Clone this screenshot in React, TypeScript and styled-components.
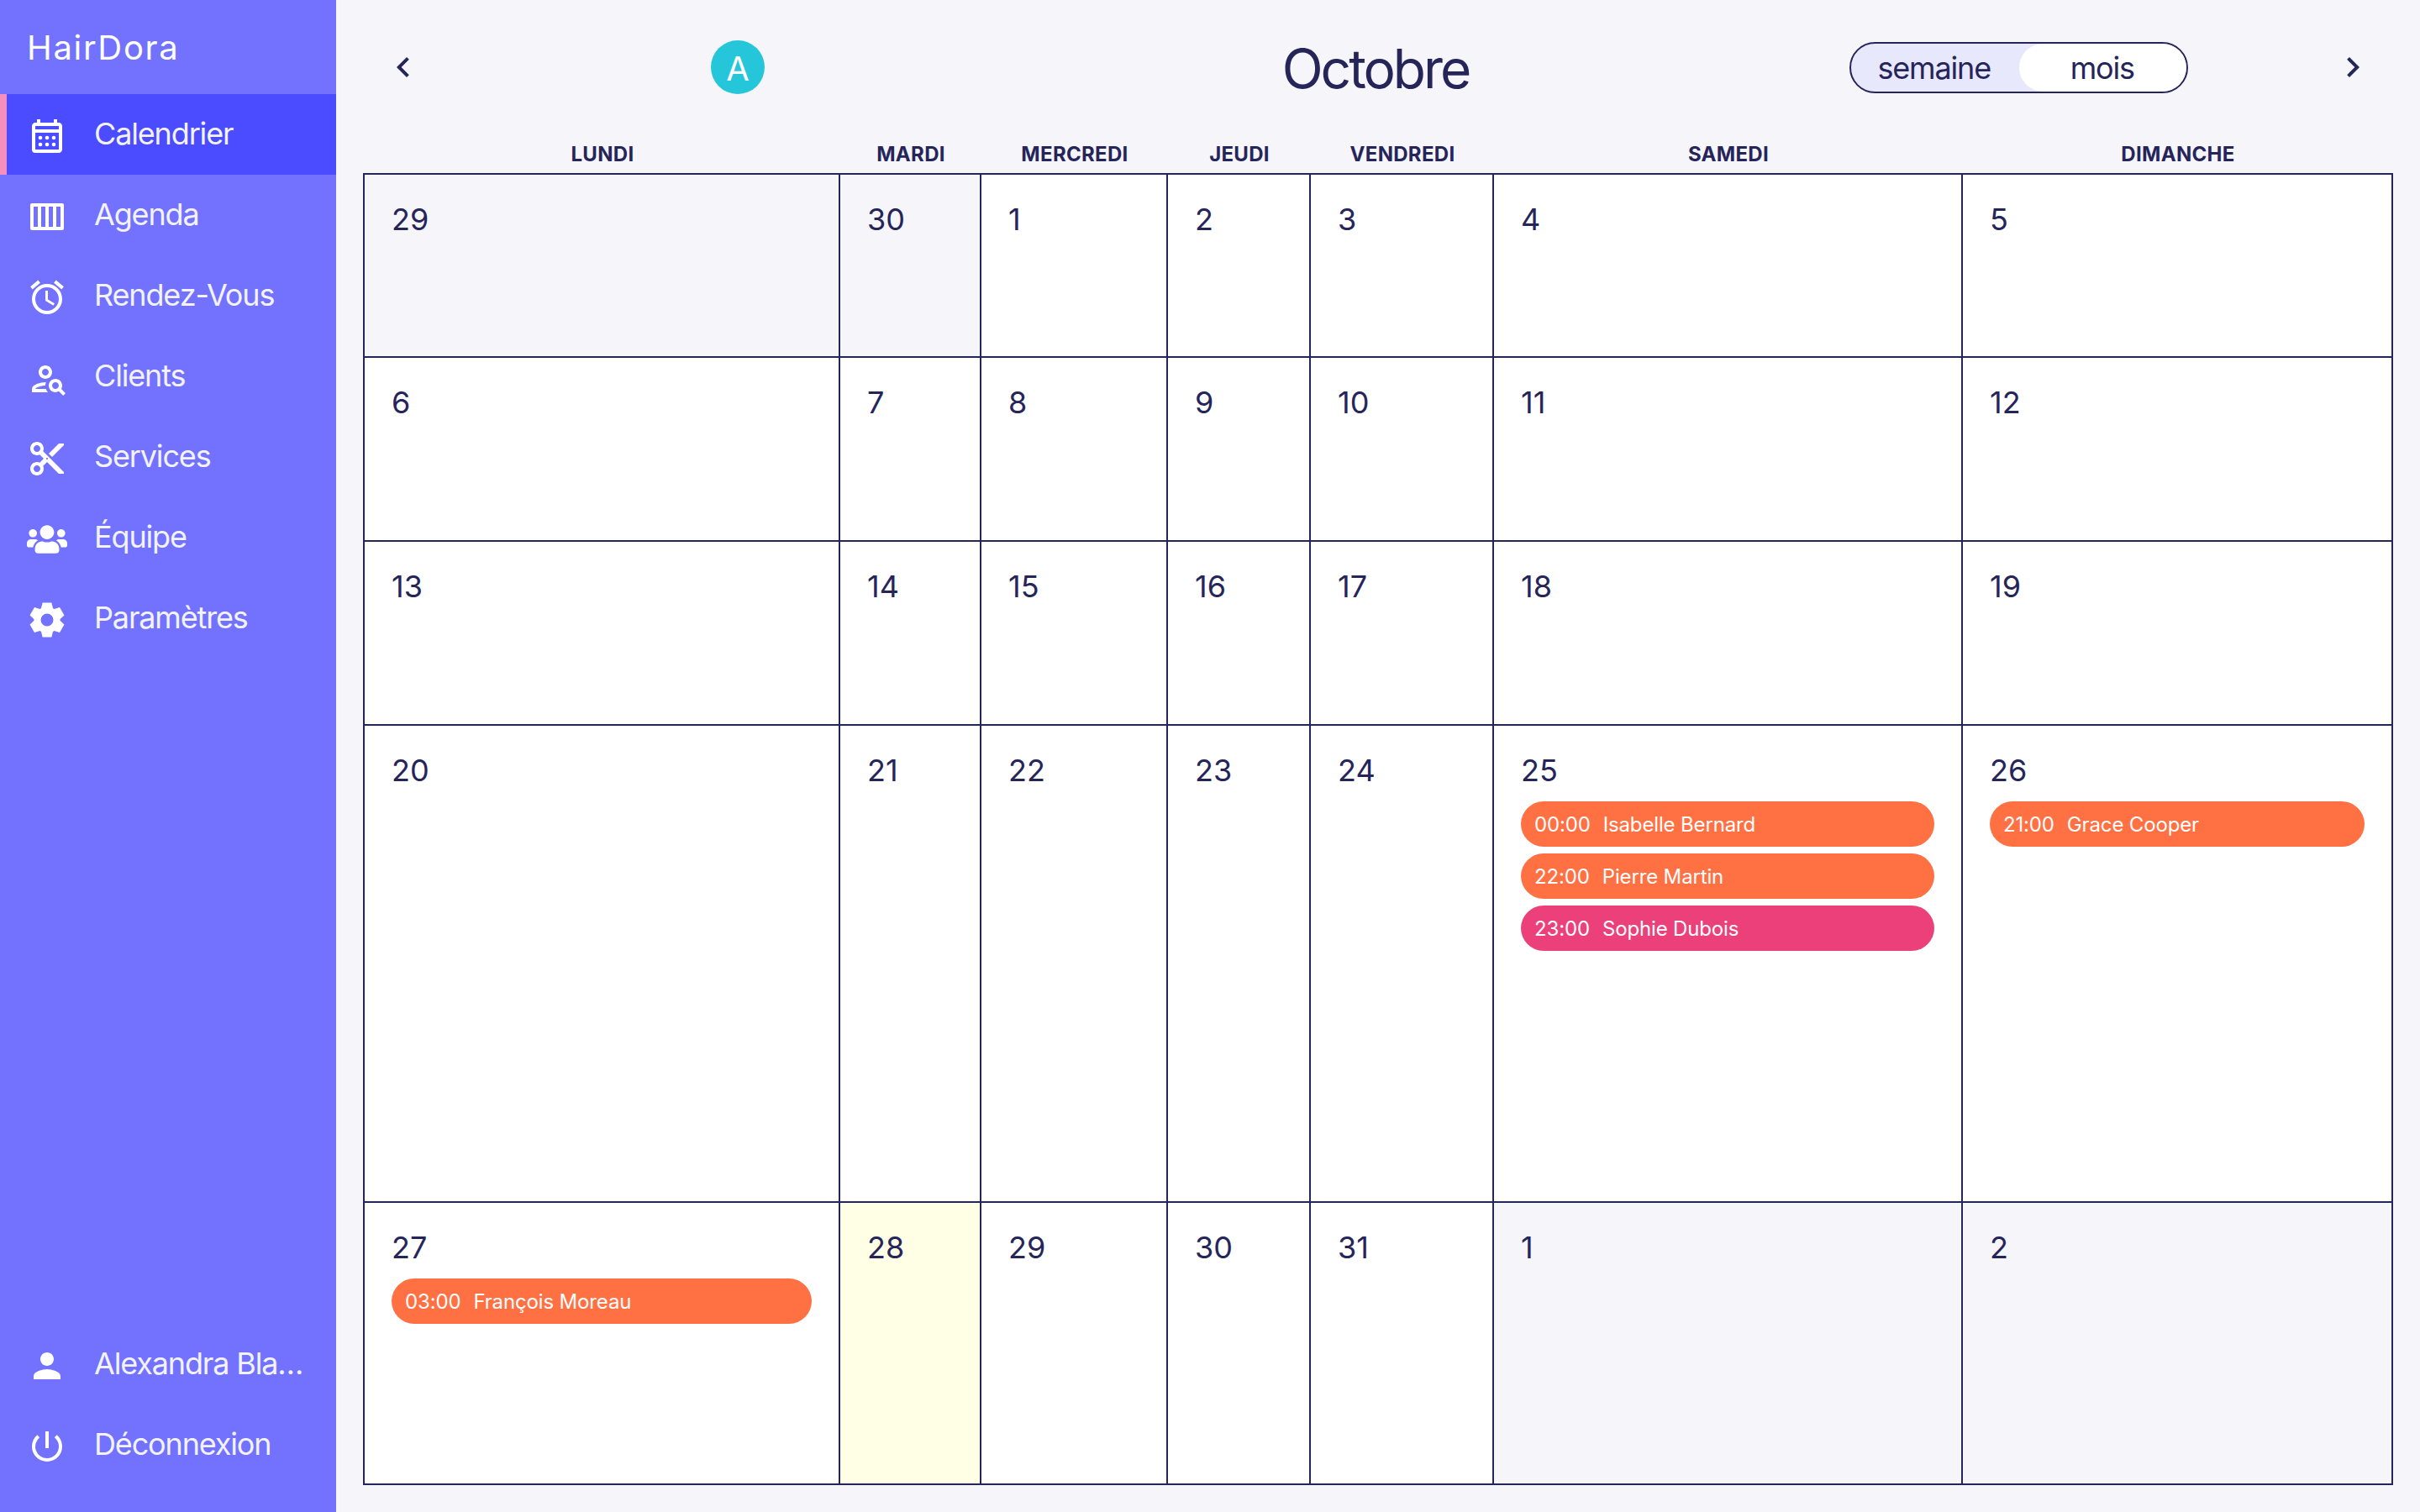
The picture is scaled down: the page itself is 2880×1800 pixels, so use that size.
import React from "react";
import styled, { createGlobalStyle } from "styled-components";
import {
  MdOutlineAlarm,
  MdContentCut,
  MdPerson,
  MdPowerSettingsNew,
  MdOutlinePersonSearch,
  MdChevronLeft,
  MdChevronRight,
} from "react-icons/md";
import { FaUsers } from "react-icons/fa";

const INK = "#25255a";

const GlobalStyle = createGlobalStyle`
  html, body { margin: 0; padding: 0; }
  body { font-family: Inter, "Liberation Sans", sans-serif; background: #f5f5fa; }
  * { box-sizing: border-box; }
`;

const Shell = styled.div`
  display: flex;
  width: 2880px;
  height: 1800px;
  background: #f5f5fa;
  color: ${INK};
  overflow: hidden;
`;

const Sidebar = styled.aside`
  width: 400px;
  flex: none;
  display: flex;
  flex-direction: column;
  background: #7272ff;
  padding-bottom: 32px;
`;

const Logo = styled.div`
  height: 112px;
  display: flex;
  align-items: center;
  padding-left: 32px;
  font-size: 40px;
  letter-spacing: 1.7px;
  color: #fff;
`;

const NavList = styled.nav`
  display: flex;
  flex-direction: column;
  flex: 1;
`;

const NavItem = styled.div<{ $active?: boolean }>`
  height: 96px;
  display: flex;
  align-items: center;
  gap: 32px;
  padding-left: ${(p) => (p.$active ? "24px" : "32px")};
  border-left: ${(p) => (p.$active ? "8px solid #f78fbc" : "none")};
  background: ${(p) => (p.$active ? "#4b4bff" : "transparent")};
  font-size: 36px;
  letter-spacing: -1.15px;
  color: #f3f3ff;
`;

const Spacer = styled.div`
  flex: 1;
`;

const NavIcon = styled.span`
  width: 48px;
  height: 48px;
  margin-top: 4px;
  flex: none;
  display: flex;
  align-items: center;
  justify-content: center;
  color: #fff;
  font-size: 48px;
`;

const NavLabel = styled.span`
  width: 256px;
  padding-bottom: 2px;
  white-space: nowrap;
  overflow: hidden;
  text-overflow: ellipsis;
`;

const SearchPerson = styled(MdOutlinePersonSearch)`
  transform: translate(2px, 1px);
`;

const Main = styled.main`
  flex: 1;
  min-width: 0;
  display: flex;
  flex-direction: column;
  padding: 48px 32px 0;
`;

const TopBar = styled.header`
  height: 64px;
  display: flex;
  align-items: center;
`;

const TopSide = styled.div<{ $end?: boolean }>`
  flex: 1;
  display: flex;
  align-items: center;
  justify-content: ${(p) => (p.$end ? "flex-end" : "flex-start")};
  gap: ${(p) => (p.$end ? "148px" : "318px")};
`;

const Chevron = styled.button`
  width: 96px;
  height: 64px;
  flex: none;
  border: none;
  padding: 0;
  background: none;
  display: flex;
  align-items: center;
  justify-content: center;
  color: ${INK};
  font-size: 48px;
`;

const Avatar = styled.div`
  width: 64px;
  height: 64px;
  padding-top: 3px;
  border-radius: 50%;
  background: #26c6da;
  color: #fff;
  display: flex;
  align-items: center;
  justify-content: center;
  font-size: 40px;
`;

const Title = styled.h1`
  margin: 3px 3px 0 -3px;
  font-size: 64px;
  font-weight: 400;
  line-height: 64px;
  letter-spacing: -3px;
  color: ${INK};
`;

const Toggle = styled.div`
  width: 403px;
  height: 61px;
  margin-top: 1px;
  display: grid;
  grid-template-columns: 1fr 1fr;
  border: 2px solid ${INK};
  border-radius: 31px;
  background: #e8e8fd;
  overflow: hidden;
`;

const ToggleOption = styled.div<{ $white?: boolean }>`
  display: flex;
  align-items: center;
  justify-content: center;
  padding-top: 1px;
  padding-right: ${(p) => (p.$white ? "1px" : "2px")};
  font-size: 36px;
  letter-spacing: -1.15px;
  border-radius: 30px;
  background: ${(p) => (p.$white ? "#fff" : "transparent")};
`;

const DayHeads = styled.div`
  margin-top: 57px;
  padding: 0 2px;
  display: grid;
  grid-template-columns: 566px 168px 222px 170px 218px 558px 512px;
`;

const DayHead = styled.div`
  height: 37px;
  padding-bottom: 8px;
  display: flex;
  align-items: center;
  justify-content: center;
  font-size: 24px;
  font-weight: 700;
  letter-spacing: 0.3px;
  color: ${INK};
`;

const Weeks = styled.div`
  width: 2416px;
  display: grid;
  grid-template-columns: 566px 168px 222px 170px 218px 558px 512px;
  grid-template-rows: 218px 219px 219px 568px 336px;
  border-top: 2px solid ${INK};
  border-left: 2px solid ${INK};
`;

const Cell = styled.div<{ $tone: "plain" | "muted" | "today" }>`
  padding: 31px 32px 0;
  border-right: 2px solid ${INK};
  border-bottom: 2px solid ${INK};
  min-width: 0;
  background: ${(p) =>
    p.$tone === "muted" ? "#f5f5fa" : p.$tone === "today" ? "#ffffe6" : "#fff"};
`;

const DayNumber = styled.div`
  font-size: 36px;
  line-height: 44px;
  margin-bottom: 15px;
  color: ${INK};
`;

const EventPill = styled.div<{ $pink?: boolean }>`
  height: 54px;
  margin-bottom: 8px;
  border-radius: 27px;
  padding: 0 16px;
  display: flex;
  align-items: center;
  gap: 15px;
  background: ${(p) => (p.$pink ? "#ec407a" : "#ff7043")};
  color: #fff;
  font-size: 24px;
  letter-spacing: -0.15px;
  white-space: nowrap;
`;

const CalendarIcon = () => (
  <svg width="48" height="48" viewBox="0 0 24 24" fill="#fff">
    <path
      fillRule="evenodd"
      d="M19 4h-1V2h-2v2H8V2H6v2H5c-1.11 0-1.99.9-1.99 2L3 20a2 2 0 0 0 2 2h14c1.1 0 2-.9 2-2V6c0-1.1-.9-2-2-2zm0 16H5V10h14v10zm0-12H5V6h14v2z"
    />
    {[8, 12, 16].flatMap((x) =>
      [13, 17].map((y) => <circle key={`${x}-${y}`} cx={x} cy={y} r="1.15" />),
    )}
  </svg>
);

const AgendaIcon = () => (
  <svg width="48" height="48" viewBox="0 0 48 48" fill="#fff">
    <path
      fillRule="evenodd"
      d="M6 8h36a2 2 0 0 1 2 2v28a2 2 0 0 1-2 2H6a2 2 0 0 1-2-2V10a2 2 0 0 1 2-2zM8 12v24h5V12zM17 12v24h5V12zM26 12v24h5V12zM35 12v24h5V12z"
    />
  </svg>
);

const GearIcon = () => (
  <svg width="48" height="48" viewBox="-24 -24 48 48" fill="#fff">
    <circle r="11.5" fill="none" stroke="#fff" strokeWidth="8" />
    {[0, 60, 120, 180, 240, 300].map((a) => (
      <polygon key={a} points="-7.2,-13 7.2,-13 5.4,-20.5 -5.4,-20.5" transform={`rotate(${a})`} />
    ))}
  </svg>
);

type EventData = { time: string; name: string; pink?: boolean };
type DayData = { n: number; tone?: "muted" | "today"; events?: EventData[] };

const HEADS = ["LUNDI", "MARDI", "MERCREDI", "JEUDI", "VENDREDI", "SAMEDI", "DIMANCHE"];

const DAYS: DayData[] = [
  { n: 29, tone: "muted" }, { n: 30, tone: "muted" }, { n: 1 }, { n: 2 }, { n: 3 }, { n: 4 }, { n: 5 },
  { n: 6 }, { n: 7 }, { n: 8 }, { n: 9 }, { n: 10 }, { n: 11 }, { n: 12 },
  { n: 13 }, { n: 14 }, { n: 15 }, { n: 16 }, { n: 17 }, { n: 18 }, { n: 19 },
  { n: 20 }, { n: 21 }, { n: 22 }, { n: 23 }, { n: 24 },
  {
    n: 25,
    events: [
      { time: "00:00", name: "Isabelle Bernard" },
      { time: "22:00", name: "Pierre Martin" },
      { time: "23:00", name: "Sophie Dubois", pink: true },
    ],
  },
  { n: 26, events: [{ time: "21:00", name: "Grace Cooper" }] },
  { n: 27, events: [{ time: "03:00", name: "François Moreau" }] },
  { n: 28, tone: "today" }, { n: 29 }, { n: 30 }, { n: 31 }, { n: 1, tone: "muted" }, { n: 2, tone: "muted" },
];

export default function App() {
  return (
    <Shell>
      <GlobalStyle />
      <Sidebar>
        <Logo>HairDora</Logo>
        <NavList>
          <NavItem $active>
            <NavIcon><CalendarIcon /></NavIcon>
            <NavLabel>Calendrier</NavLabel>
          </NavItem>
          <NavItem>
            <NavIcon><AgendaIcon /></NavIcon>
            <NavLabel>Agenda</NavLabel>
          </NavItem>
          <NavItem>
            <NavIcon><MdOutlineAlarm /></NavIcon>
            <NavLabel>Rendez-Vous</NavLabel>
          </NavItem>
          <NavItem>
            <NavIcon><SearchPerson /></NavIcon>
            <NavLabel>Clients</NavLabel>
          </NavItem>
          <NavItem>
            <NavIcon><MdContentCut /></NavIcon>
            <NavLabel>Services</NavLabel>
          </NavItem>
          <NavItem>
            <NavIcon><FaUsers /></NavIcon>
            <NavLabel>Équipe</NavLabel>
          </NavItem>
          <NavItem>
            <NavIcon><GearIcon /></NavIcon>
            <NavLabel>Paramètres</NavLabel>
          </NavItem>
          <Spacer />
          <NavItem>
            <NavIcon><MdPerson /></NavIcon>
            <NavLabel>Alexandra Blanchard</NavLabel>
          </NavItem>
          <NavItem>
            <NavIcon><MdPowerSettingsNew /></NavIcon>
            <NavLabel>Déconnexion</NavLabel>
          </NavItem>
        </NavList>
      </Sidebar>
      <Main>
        <TopBar>
          <TopSide>
            <Chevron><MdChevronLeft /></Chevron>
            <Avatar>A</Avatar>
          </TopSide>
          <Title>Octobre</Title>
          <TopSide $end>
            <Toggle>
              <ToggleOption>semaine</ToggleOption>
              <ToggleOption $white>mois</ToggleOption>
            </Toggle>
            <Chevron><MdChevronRight /></Chevron>
          </TopSide>
        </TopBar>
        <DayHeads>
          {HEADS.map((h) => <DayHead key={h}>{h}</DayHead>)}
        </DayHeads>
        <Weeks>
          {DAYS.map((d, i) => (
            <Cell key={i} $tone={d.tone ?? "plain"}>
              <DayNumber>{d.n}</DayNumber>
              {d.events?.map((e) => (
                <EventPill key={e.time} $pink={e.pink}>
                  <span>{e.time}</span>
                  <span>{e.name}</span>
                </EventPill>
              ))}
            </Cell>
          ))}
        </Weeks>
      </Main>
    </Shell>
  );
}
